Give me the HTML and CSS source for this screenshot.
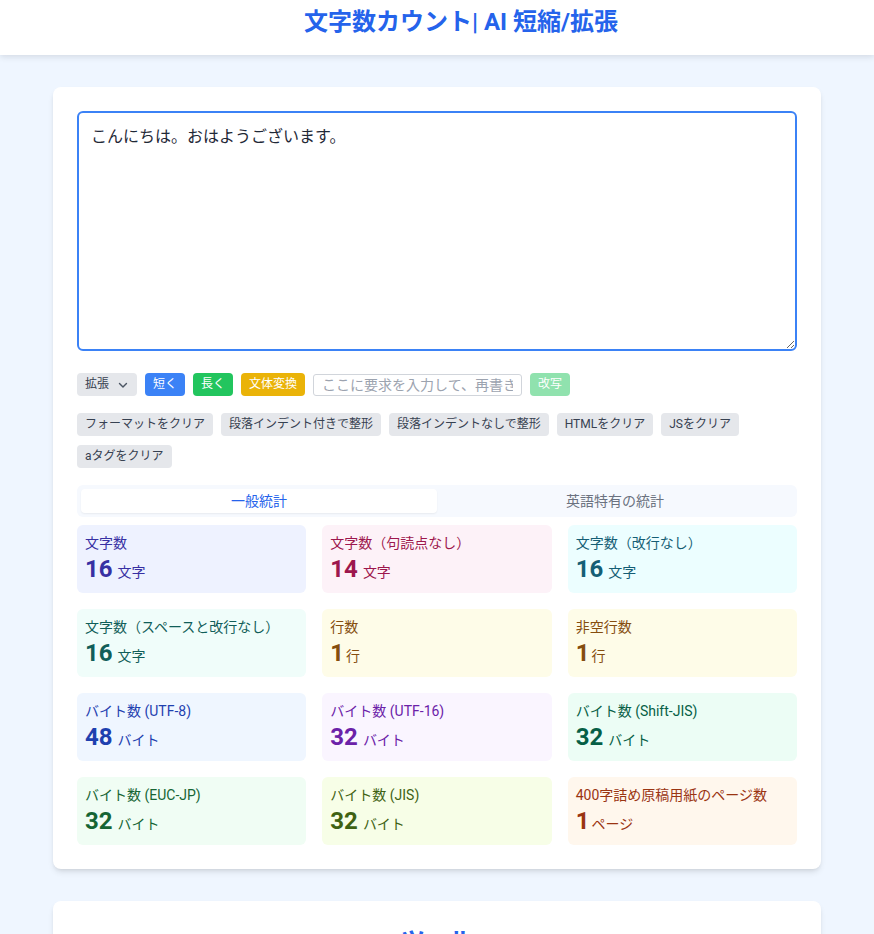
FILE: index.html
```html
<!DOCTYPE html>
<html lang="ja">
<head>
<meta charset="utf-8">
<title>文字数カウント| AI 短縮/拡張</title>
<link rel="stylesheet" href="styles.css">
</head>
<body>
<header class="site-header">
  <h1 class="site-title">文字数カウント| AI 短縮/拡張</h1>
</header>
<main class="main">
  <section class="card">
    <textarea class="editor">こんにちは。おはようございます。</textarea>
    <div class="ai-row">
      <button class="btn btn-gray select-btn">拡張<svg class="chev" width="12" height="12" viewBox="0 0 12 12"><path d="M2.5 4.5 L6 8 L9.5 4.5" fill="none" stroke="#4b5563" stroke-width="1.4" stroke-linecap="round" stroke-linejoin="round"/></svg></button>
      <button class="btn btn-blue">短く</button>
      <button class="btn btn-green">長く</button>
      <button class="btn btn-yellow">文体変換</button>
      <input class="req-input" type="text" placeholder="ここに要求を入力して、再書きします">
      <button class="btn btn-green btn-disabled">改写</button>
    </div>
    <div class="tool-row">
      <button class="btn btn-gray">フォーマットをクリア</button>
      <button class="btn btn-gray">段落インデント付きで整形</button>
      <button class="btn btn-gray">段落インデントなしで整形</button>
      <button class="btn btn-gray">HTMLをクリア</button>
      <button class="btn btn-gray">JSをクリア</button>
      <button class="btn btn-gray">aタグをクリア</button>
    </div>
    <div class="tabs">
      <div class="tab tab-active">一般統計</div>
      <div class="tab">英語特有の統計</div>
    </div>
    <div class="stats">
      <div class="stat s-indigo"><div class="stat-label">文字数</div><div class="stat-value"><span class="num">16</span><span class="unit">文字</span></div></div>
      <div class="stat s-pink"><div class="stat-label">文字数（句読点なし）</div><div class="stat-value"><span class="num">14</span><span class="unit">文字</span></div></div>
      <div class="stat s-cyan"><div class="stat-label">文字数（改行なし）</div><div class="stat-value"><span class="num">16</span><span class="unit">文字</span></div></div>
      <div class="stat s-teal"><div class="stat-label">文字数（スペースと改行なし）</div><div class="stat-value"><span class="num">16</span><span class="unit">文字</span></div></div>
      <div class="stat s-yellow"><div class="stat-label">行数</div><div class="stat-value"><span class="num">1</span><span class="unit tight">行</span></div></div>
      <div class="stat s-yellow"><div class="stat-label">非空行数</div><div class="stat-value"><span class="num">1</span><span class="unit tight">行</span></div></div>
      <div class="stat s-blue"><div class="stat-label">バイト数 (UTF-8)</div><div class="stat-value"><span class="num">48</span><span class="unit">バイト</span></div></div>
      <div class="stat s-purple"><div class="stat-label">バイト数 (UTF-16)</div><div class="stat-value"><span class="num">32</span><span class="unit">バイト</span></div></div>
      <div class="stat s-emerald"><div class="stat-label">バイト数 (Shift-JIS)</div><div class="stat-value"><span class="num">32</span><span class="unit">バイト</span></div></div>
      <div class="stat s-green"><div class="stat-label">バイト数 (EUC-JP)</div><div class="stat-value"><span class="num">32</span><span class="unit">バイト</span></div></div>
      <div class="stat s-lime"><div class="stat-label">バイト数 (JIS)</div><div class="stat-value"><span class="num">32</span><span class="unit">バイト</span></div></div>
      <div class="stat s-orange"><div class="stat-label">400字詰め原稿用紙のページ数</div><div class="stat-value"><span class="num">1</span><span class="unit tight">ページ</span></div></div>
    </div>
  </section>
  <section class="card card-second">
    <h2 class="section-title">ツール</h2>
  </section>
</main>
</body>
</html>
```
FILE: styles.css
```css
* { box-sizing: border-box; }
html, body { margin: 0; padding: 0; }
body {
  background: #eff6ff;
  font-family: Roboto, "Noto Sans CJK JP", sans-serif;
  color: #1f2937;
}
.site-header {
  background: #ffffff;
  height: 55px;
  box-shadow: 0 2px 6px rgba(15, 23, 42, 0.12);
  position: relative;
  z-index: 1;
}
.site-title {
  margin: 0;
  padding-top: 8px;
  padding-left: 48px;
  text-align: center;
  font-size: 24px;
  line-height: 28px;
  font-weight: 700;
  color: #2563eb;
}
.main {
  width: 768px;
  margin: 0 auto;
  padding-top: 32px;
}
.card {
  background: #ffffff;
  border-radius: 8px;
  box-shadow: 0 4px 6px -1px rgba(0,0,0,0.1), 0 2px 4px -2px rgba(0,0,0,0.1);
  padding: 24px;
}
.card-second { margin-top: 32px; }
.editor {
  display: block;
  width: 100%;
  height: 240px;
  border: 2px solid #3b82f6;
  border-radius: 6px;
  padding: 12px 12px;
  font-family: Roboto, "Noto Sans CJK JP", sans-serif;
  font-size: 16px;
  line-height: 24px;
  color: #1f2937;
  outline: none;
  resize: vertical;
}
.ai-row {
  display: flex;
  align-items: center;
  gap: 8px;
  margin-top: 22px;
}
.tool-row {
  display: flex;
  flex-wrap: wrap;
  gap: 9px 8px;
  margin-top: 17px;
}
.btn {
  border: none;
  border-radius: 4px;
  padding: 4px 8px;
  font-family: Roboto, "Noto Sans CJK JP", sans-serif;
  font-size: 12px;
  line-height: 15px;
  height: 23px;
  color: #ffffff;
  cursor: pointer;
  white-space: nowrap;
}
.btn-gray { background: #e5e7eb; color: #374151; }
.btn-blue { background: #3b82f6; }
.btn-green { background: #22c55e; }
.btn-yellow { background: #eab308; }
.btn-disabled { background: #90e2ae; }
.select-btn {
  display: flex;
  align-items: center;
  width: 60px;
}
.chev { margin-left: 8px; }
.req-input {
  width: 209px;
  height: 22px;
  border: 1px solid #d1d5db;
  border-radius: 3px;
  padding: 0 8px;
  font-family: Roboto, "Noto Sans CJK JP", sans-serif;
  font-size: 14px;
  color: #374151;
  outline: none;
}
.req-input::placeholder { color: #9ca3af; }
.tabs {
  display: flex;
  margin-top: 17px;
  background: #f6f9fe;
  border-radius: 6px;
  padding: 4px;
}
.tab {
  flex: 1;
  text-align: center;
  font-size: 14px;
  line-height: 24px;
  color: #6b7280;
  border-radius: 4px;
}
.tab-active {
  background: #ffffff;
  color: #2563eb;
  box-shadow: 0 1px 2px rgba(0,0,0,0.06);
}
.stats {
  display: grid;
  grid-template-columns: repeat(3, 1fr);
  gap: 16px;
  margin-top: 8px;
}
.stat {
  border-radius: 6px;
  padding: 8px;
  height: 68px;
}
.stat-label {
  font-size: 14px;
  line-height: 20px;
}
.stat-value {
  display: flex;
  align-items: baseline;
  line-height: 32px;
}
.num {
  font-size: 24px;
  font-weight: 700;
}
.unit {
  font-size: 14px;
  margin-left: 5px;
}
.unit.tight { margin-left: 2px; }
.s-indigo { background: #eef2ff; color: #3730a3; }
.s-pink { background: #fdf2f8; color: #9d174d; }
.s-cyan { background: #ecfeff; color: #155e75; }
.s-teal { background: #f0fdfa; color: #115e59; }
.s-yellow { background: #fefce8; color: #854d0e; }
.s-blue { background: #eff6ff; color: #1e40af; }
.s-purple { background: #faf5ff; color: #6b21a8; }
.s-emerald { background: #ecfdf5; color: #065f46; }
.s-green { background: #f0fdf4; color: #166534; }
.s-lime { background: #f7fee7; color: #3f6212; }
.s-orange { background: #fff7ed; color: #9a3412; }
.section-title {
  margin: 0;
  text-align: center;
  font-size: 24px;
  line-height: 32px;
  font-weight: 700;
  color: #2563eb;
}
```
